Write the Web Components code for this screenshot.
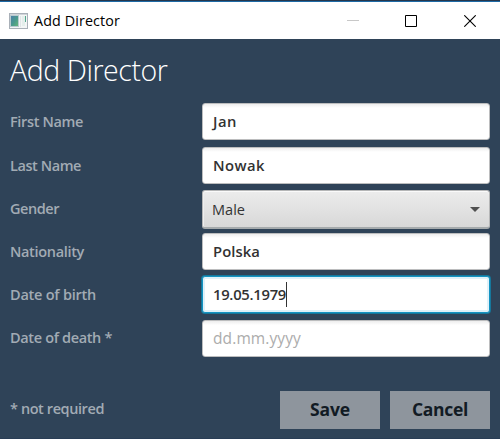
<!DOCTYPE html>
<html lang="en"><head><meta charset="utf-8"><title>Add Director</title>
<style>
html,body{margin:0;height:100%;overflow:hidden;background:#2f4358}
body{font-family:"Open Sans","Noto Sans",sans-serif}
</style></head><body>
<director-dialog></director-dialog>
<script>
const define=(name,html,setup)=>customElements.define(name,class extends HTMLElement{
  constructor(){super();this.attachShadow({mode:'open'}).innerHTML=html;}
  connectedCallback(){if(setup)setup(this,this.shadowRoot);}
});

/* Text run spread by letter spacing to a fixed width */
define('fit-text','<style>:host{display:block;white-space:pre}span{display:inline-block}</style><span><slot></slot></span>',(el,root)=>{
  const s=root.querySelector('span'),w=+el.getAttribute('width');
  const n=el.textContent.length;
  s.style.letterSpacing=((w-s.getBoundingClientRect().width)/n)+'px';
});

define('title-bar',`<style>
:host{display:flex;height:37px;background:#fff;border-top:1px solid #1d6aa5;box-sizing:content-box;align-items:center;color:#000;font-size:14.3px}
.app{margin:0 6px 0 9px;flex:none}
fit-text{flex:1;line-height:37px}
.ctl{width:58.5px;display:flex;justify-content:center}
.ctl:last-child{padding-right:1px}
svg{display:block}
</style>
<svg class="app" width="19" height="16" viewBox="0 0 19 16"><defs><linearGradient id="g" x2="1" y2="1"><stop stop-color="#4c80a8"/><stop offset=".55" stop-color="#4a9b8c"/><stop offset="1" stop-color="#65b47b"/></linearGradient></defs><path fill="#a9b0b8" d="M0 0h19v16H0z"/><path fill="#f3f5f5" d="M1 2h17v13H1z"/><path fill="#d0d5d9" d="M1 1h17v1H1z"/><path fill="#b9cbd0" d="M1 2h9v12H1z"/><path fill="url(#g)" d="M2 3h7v10H2z"/><path fill="#e0e5e7" d="M11 3h1v11h-1z"/><path fill="#e4eeeb" d="M13 3h3v10h-3z"/><path fill="#53a78c" d="M16 3h1v6h-1z"/></svg>
<fit-text width="86">Add Director</fit-text>
<div class="ctl"><svg width="12" height="12"><path fill="#c8c8c8" d="M0 5h12v1H0z"/></svg></div>
<div class="ctl"><svg width="12" height="12"><path fill="none" stroke="#000" d="M.5.5h11v11H.5z"/></svg></div>
<div class="ctl"><svg width="12" height="12"><path fill="none" stroke="#000" stroke-width="1.1" d="M.3.3l11.4 11.4M11.7.3L.3 11.7"/></svg></div>`);

define('form-row',`<style>
:host{display:grid;grid-template-columns:192px 288px;align-items:center;color:#a2abb4;font-size:14.5px;font-weight:600}
</style><slot name="label"></slot><slot></slot>`);

define('text-field',`<style>
:host{display:flex;box-sizing:border-box;height:37px;padding:0 10px;align-items:center;border:1px solid #bcbdbe;border-radius:3px;background:linear-gradient(#ededed,#fff 4px);color:#323232;font-size:14.8px;font-weight:600}
:host([focused]){border-color:#1393c2;background:#fff;box-shadow:0 0 0 1px #16779b,inset 0 0 0 2px #dff1f9}
:host([empty]){color:#acacac;font-weight:400;font-size:15.5px}
::slotted(fit-text){padding-bottom:2px}
:host([empty]) ::slotted(fit-text){padding-bottom:1px}
.caret{display:none;width:1px;height:25px;background:#333}
:host([focused]) .caret{display:block}
</style><slot></slot><i class="caret"></i>`);

define('select-field',`<style>
:host{display:flex;box-sizing:border-box;height:39px;padding:0 9px;align-items:center;justify-content:space-between;border:1px solid #b5b6b7;border-bottom:2px solid #a5aaac;border-radius:3px;background:linear-gradient(#ececec,#d8d8d8);box-shadow:inset 0 1px #fafafa,inset 1px 0 #eee;color:#333;font-size:14.5px;font-weight:400}
</style><slot></slot><svg width="10" height="5"><path fill="#505050" d="M0 0h10L5 5z"/></svg>`);

define('push-button',`<style>
:host{display:flex;width:100px;height:38px;align-items:center;justify-content:center;background:#8e959d;color:#121b24;font-size:17.5px;font-weight:700}
::slotted(fit-text){margin-top:-2px}
</style><slot></slot>`);

define('director-dialog',`<style>
:host{display:flex;flex-direction:column;box-sizing:border-box;width:500px;height:439px;border-top:1px solid #25364b;border-bottom:1px solid #293d55}
.head{height:64px;padding:0 10px;box-sizing:border-box;font-size:28.5px;line-height:63px;font-weight:300;color:#fff}
form-row{margin-left:10px}
.f{display:flex;margin:34px 10px 0;align-items:center;gap:10px;color:#a2abb4;font-size:14.5px;font-weight:600}
.f>fit-text{flex:1;padding-bottom:4px}
.r3>[slot],.r6>[slot]{padding-bottom:3px}
.r2{margin-top:7px}.r3{margin-top:6px}.r4{margin-top:4px}.r5{margin-top:6px}.r6{margin-top:7px}
</style>
<title-bar></title-bar>
<div class="head"><fit-text width="157.5">Add Director</fit-text></div>
<form-row class="r1"><fit-text slot="label" width="73">First Name</fit-text><text-field><fit-text width="24">Jan</fit-text></text-field></form-row>
<form-row class="r2"><fit-text slot="label" width="71">Last Name</fit-text><text-field><fit-text width="52">Nowak</fit-text></text-field></form-row>
<form-row class="r3"><fit-text slot="label" width="49">Gender</fit-text><select-field><fit-text width="33">Male</fit-text></select-field></form-row>
<form-row class="r4"><fit-text slot="label" width="74">Nationality</fit-text><text-field><fit-text width="47">Polska</fit-text></text-field></form-row>
<form-row class="r5"><fit-text slot="label" width="86">Date of birth</fit-text><text-field focused><fit-text width="73">19.05.1979</fit-text></text-field></form-row>
<form-row class="r6"><fit-text slot="label" width="102">Date of death *</fit-text><text-field empty><fit-text width="88">dd.mm.yyyy</fit-text></text-field></form-row>
<div class="f"><fit-text width="94">* not required</fit-text><push-button><fit-text width="40">Save</fit-text></push-button><push-button><fit-text width="56">Cancel</fit-text></push-button></div>`);
</script></body></html>
